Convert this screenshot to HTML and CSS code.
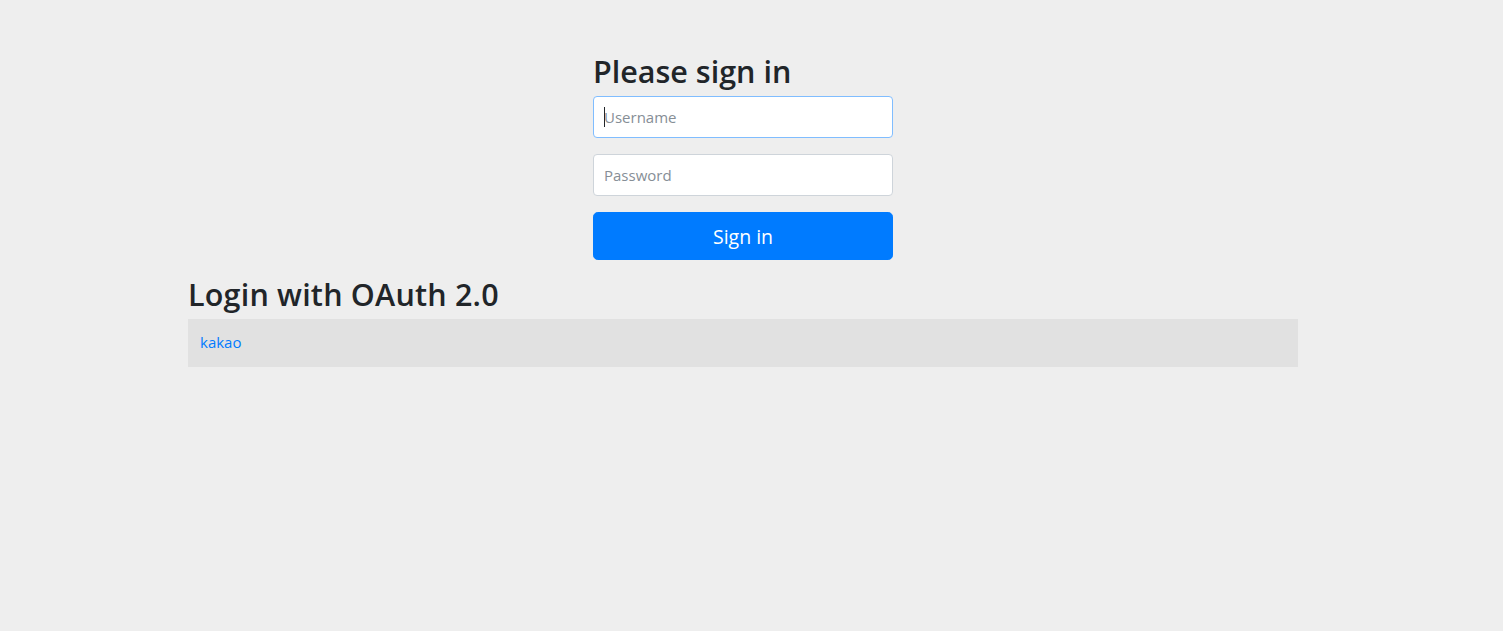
FILE: index.html
```html
<!DOCTYPE html>
<html lang="en">
<head>
<meta charset="utf-8">
<title>Please sign in</title>
<link rel="stylesheet" href="styles.css">
</head>
<body>
<div class="page">
  <div class="container">
    <form class="form-signin" method="post" action="#">
      <h2 class="heading">Please sign in</h2>
      <p class="field">
        <span class="input-wrap">
          <input type="text" class="form-control focused" placeholder="Username">
          <span class="caret"></span>
        </span>
      </p>
      <p class="field">
        <input type="password" class="form-control" placeholder="Password">
      </p>
      <button class="btn-primary" type="button">Sign in</button>
    </form>
    <h2 class="heading heading-oauth">Login with OAuth 2.0</h2>
    <table class="table">
      <tr><td><a href="#">kakao</a></td></tr>
    </table>
  </div>
</div>
</body>
</html>
```
FILE: styles.css
```css
* { box-sizing: border-box; }
html, body { margin: 0; padding: 0; }
body {
  background: #eeeeee;
  font-family: "Open Sans", "Noto Sans", sans-serif;
  color: #212529;
  font-size: 16px;
}
.page {
  width: 1486px;
  padding-top: 37px;
}
.container {
  width: 1110px;
  margin: 0 auto;
}
.form-signin {
  width: 330px;
  padding: 15px;
  margin: 0 auto;
}
.heading {
  margin: 0 0 10px;
  padding-top: 2px;
  height: 34px;
  font-size: 30.5px;
  font-weight: 600;
  letter-spacing: 0;
  line-height: 34px;
  color: #212529;
}
.heading-oauth { margin-bottom: 10px; letter-spacing: 0.2px; }
.field {
  margin: 0 0 16px;
}
.input-wrap {
  display: block;
  position: relative;
}
.form-control {
  display: block;
  width: 100%;
  height: 42px;
  padding: 10px;
  font-size: 15px;
  font-family: inherit;
  line-height: 20px;
  color: #495057;
  background: #fff;
  border: 1px solid #ced4da;
  border-radius: 4px;
  outline: none;
}
.form-control::placeholder { color: #868e96; }
.form-control.focused { border-color: #80bdff; }
.caret {
  position: absolute;
  left: 11px;
  top: 11px;
  width: 1px;
  height: 20px;
  background: #212529;
}
.btn-primary {
  display: block;
  width: 100%;
  height: 48px;
  padding: 9px 16px 7px;
  font-family: inherit;
  font-size: 19.5px;
  line-height: 30px;
  color: #fff;
  background: #007bff;
  border: 1px solid #007bff;
  border-radius: 4.8px;
  cursor: pointer;
}
.table {
  width: 100%;
  border-collapse: collapse;
}
.table td {
  height: 48px;
  padding: 11px 12px 13px;
  font-size: 15px;
  line-height: 24px;
  background: #e1e1e1;
}
.table a {
  color: #007bff;
  text-decoration: none;
}
```
